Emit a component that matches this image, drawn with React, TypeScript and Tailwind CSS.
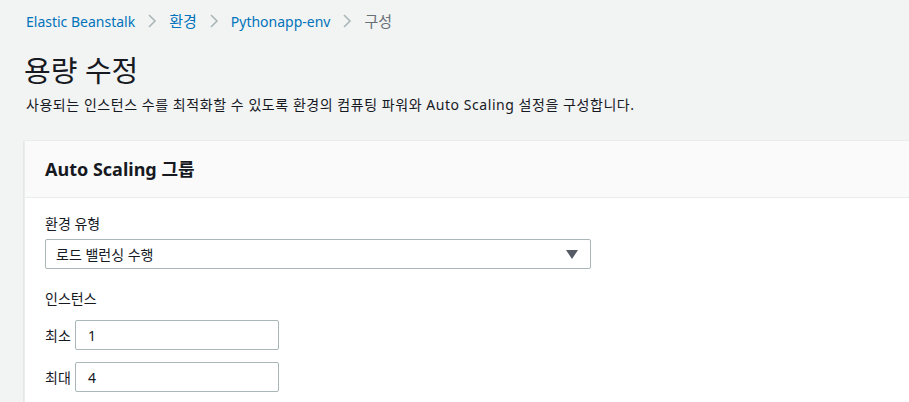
import React from "react";

const font = { fontFamily: '"Noto Sans", "Noto Sans CJK KR", sans-serif' };

function Chevron() {
  return (
    <svg width="10" height="16" viewBox="0 0 10 16" className="mx-[12px]">
      <path d="M2 2 L8 8 L2 14" fill="none" stroke="#aab7b8" strokeWidth="1.6" />
    </svg>
  );
}

export default function App() {
  return (
    <div className="w-[909px] h-[402px] overflow-hidden bg-[#f2f3f3] text-[#16191f]" style={font}>
      <div className="pl-[26px] pt-[16px] flex items-center h-[26px] text-[14px]">
        <span className="text-[#0073bb]">Elastic Beanstalk</span>
        <Chevron />
        <span className="text-[#0073bb] text-[15px]">환경</span>
        <Chevron />
        <span className="text-[#0073bb]">Pythonapp-env</span>
        <Chevron />
        <span className="text-[#687078] text-[15px]">구성</span>
      </div>
      <h1 className="pl-[24px] mt-[27px] text-[29px] leading-[36px] font-normal">용량 수정</h1>
      <p className="pl-[26px] mt-[6px] text-[14px] leading-[20px] tracking-[0.55px]">
        사용되는 인스턴스 수를 최적화할 수 있도록 환경의 컴퓨팅 파워와 Auto Scaling 설정을 구성합니다.
      </p>
      <div className="ml-[24px] mt-[25px] bg-white border border-[#eaeded] border-r-0 shadow-[0_1px_1px_0_rgba(0,28,36,0.3)]">
        <div className="h-[57px] bg-[#fafafa] border-b border-[#eaeded] flex items-center pl-[20px]">
          <h2 className="text-[18px] font-bold">Auto Scaling 그룹</h2>
        </div>
        <div className="pl-[20px] pt-[16px] pb-[60px]">
          <div className="text-[14px] leading-[20px]">환경 유형</div>
          <div className="mt-[5px] w-[546px] h-[30px] border border-[#aab7b8] rounded-[2px] flex items-center justify-between pl-[10px] pr-[12px] text-[14px]">
            <span>로드 밸런싱 수행</span>
            <svg width="12" height="9" viewBox="0 0 12 9">
              <path d="M0 0 H12 L6 9 Z" fill="#545b64" />
            </svg>
          </div>
          <div className="mt-[20px] text-[14px] leading-[20px]">인스턴스</div>
          <div className="mt-[11px] flex items-center gap-[2px] text-[14px]">
            <span className="w-[28px]">최소</span>
            <div className="w-[204px] h-[30px] border border-[#aab7b8] rounded-[2px] flex items-center pl-[12px]">1</div>
          </div>
          <div className="mt-[12px] flex items-center gap-[2px] text-[14px]">
            <span className="w-[28px]">최대</span>
            <div className="w-[204px] h-[30px] border border-[#aab7b8] rounded-[2px] flex items-center pl-[12px]">4</div>
          </div>
        </div>
      </div>
    </div>
  );
}
